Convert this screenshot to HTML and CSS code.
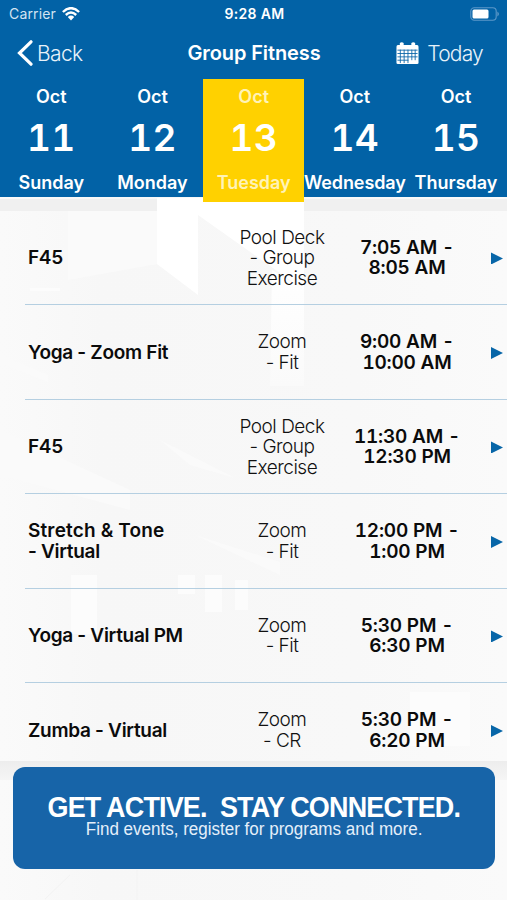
FILE: index.html
```
<!DOCTYPE html>
<html lang="en">
<head>
<meta charset="utf-8">
<meta name="viewport" content="width=device-width">
<title>Group Fitness</title>
<link rel="stylesheet" href="styles.css">
</head>
<body>
<div class="app">
  <svg class="backdrop" viewBox="0 0 507 900" aria-hidden="true">
    <defs>
      <linearGradient id="shade" x1="0" x2="1"><stop offset="0" stop-color="#fafafa"/><stop offset=".2" stop-color="#f7f7f7"/><stop offset=".7" stop-color="#f8f8f8"/><stop offset="1" stop-color="#fafafa"/></linearGradient>
      <linearGradient id="fade" x1="0" y1="0" x2="0" y2="1"><stop offset="0" stop-color="#fff"/><stop offset="1" stop-color="#fafafa"/></linearGradient>
      <linearGradient id="band" x1="0" y1="0" x2="0" y2="1"><stop offset="0" stop-color="#ededed"/><stop offset="1" stop-color="#f5f5f5"/></linearGradient>
    </defs>
    <rect width="507" height="900" fill="url(#shade)"/>
    <path d="M0 199H157V211H0zM304 199H507V211H304z" fill="#f0f0f0"/>
    <path d="M68 211H157V264L68 280z" fill="#fafafa"/>
    <path d="M157 198H304V290L198 215V295L157 264z" fill="#fff"/>
    <path d="M272 270L304 290V386H270z" fill="url(#fade)"/>
    <path d="M0 355L48 375V382L0 363zM0 430L130 490V510L0 475zM160 440L235 478L190 465zM195 535L280 562V575z" fill="#fafafa"/>
    <path d="M30 288H60V291H30zM71 575H97V634H71zM178 575H195V594H178zM205 575H222V612H205zM235 580H248V610H235zM410 692H470V746H410z" fill="#fcfcfc"/>
    <path d="M0 761H507V780H0z" fill="url(#band)"/>
    <path d="M45 899L70 875M137 870V900" stroke="#f3f3f3" fill="none"/>
  </svg>

  <header class="header">
    <div class="status">
      <div class="carrier"><span class="carrier-name">Carrier</span>
        <svg width="18" height="14" viewBox="0 0 18 14" fill="none" stroke="#fff" stroke-width="2.4"><path d="M.9 5Q9-2.7 17.1 5M3.8 8Q9 3.2 14.2 8"/><path d="M5.8 10Q9 7.2 12.2 10L9 13.4z" fill="#fff" stroke="none"/></svg>
      </div>
      <span class="clock">9:28 AM</span>
      <svg class="battery" width="30" height="14" viewBox="0 0 30 14"><rect x=".8" y=".8" width="25.4" height="12.4" rx="3.5" fill="none" stroke="#5c98c9" stroke-width="1.1"/><rect x="2.5" y="2.5" width="16" height="9" rx="1.5" fill="#fff"/><path d="M27.5 4.5Q30 7 27.5 9.5z" fill="#76a8d0"/></svg>
    </div>
    <nav class="navbar">
      <div class="back"><svg width="16" height="26" viewBox="0 0 16 26" fill="none" stroke="#fff" stroke-width="3.2" stroke-linecap="round"><path d="M14 1.8L2.5 13L14 24.2"/></svg><span class="back-text">Back</span></div>
      <h1 class="title">Group Fitness</h1>
      <div class="today">
        <svg width="23" height="23" viewBox="0 0 24 24"><path d="M2 3H4V1Q6-.5 8 1V3H16V1Q18-.5 20 1V3H22Q23.5 3 23.5 5V22Q23.5 23 22 23H2Q.5 23 .5 22V5Q.5 3 2 3z" fill="#fff"/><path d="M1.5 8.5H22.5M1.5 12H22.5M1.5 15.5H22.5M1.5 19H13M4.5 8V22M8.5 8V22M12.5 8V22M16.5 8V19M20 8V19" stroke="#0864a8" stroke-width=".9"/></svg>
        <span class="today-text">Today</span>
      </div>
    </nav>
    <div class="days">
      <div class="day"><span class="month">Oct</span><span class="date">11</span><span class="weekday">Sunday</span></div>
      <div class="day"><span class="month">Oct</span><span class="date">12</span><span class="weekday">Monday</span></div>
      <div class="day selected"><span class="month">Oct</span><span class="date">13</span><span class="weekday">Tuesday</span></div>
      <div class="day"><span class="month">Oct</span><span class="date">14</span><span class="weekday long">Wednesday</span></div>
      <div class="day"><span class="month">Oct</span><span class="date">15</span><span class="weekday">Thursday</span></div>
    </div>
  </header>

  <main class="classes">
    <div class="row"><div class="name">F45</div><div class="place">Pool Deck<br>- Group<br>Exercise</div><div class="time">7:05 AM -<br>8:05 AM</div><i class="arrow"></i></div>
    <div class="row"><div class="name">Yoga - Zoom Fit</div><div class="place">Zoom<br>- Fit</div><div class="time">9:00 AM -<br>10:00 AM</div><i class="arrow"></i></div>
    <div class="row"><div class="name">F45</div><div class="place">Pool Deck<br>- Group<br>Exercise</div><div class="time">11:30 AM -<br>12:30 PM</div><i class="arrow"></i></div>
    <div class="row"><div class="name"><span class="wide">Stretch &amp; Tone</span><br>- Virtual</div><div class="place">Zoom<br>- Fit</div><div class="time">12:00 PM -<br>1:00 PM</div><i class="arrow"></i></div>
    <div class="row"><div class="name">Yoga - Virtual PM</div><div class="place">Zoom<br>- Fit</div><div class="time">5:30 PM -<br>6:30 PM</div><i class="arrow"></i></div>
    <div class="row"><div class="name">Zumba - Virtual</div><div class="place">Zoom<br>- CR</div><div class="time">5:30 PM -<br>6:20 PM</div><i class="arrow"></i></div>
  </main>

  <footer class="promo">
    <div class="promo-title">GET ACTIVE.&nbsp; STAY CONNECTED.</div>
    <div class="promo-text">Find events, register for programs and more.</div>
  </footer>
</div>
</body>
</html>
```
FILE: styles.css
```
* { box-sizing: border-box; }
body { margin: 0; font-family: Inter, "Liberation Sans", sans-serif; }
.app { position: relative; width: 507px; height: 900px; overflow: hidden; }
.backdrop { position: absolute; inset: 0; z-index: -1; width: 507px; height: 900px; }

.header { height: 197.4px; background: #0262a6; color: #fff; }
.status { display: grid; grid-template-columns: 1fr auto 1fr; align-items: center; height: 27px; padding: 0 7px 0 9px; }
.carrier { display: flex; align-items: center; gap: 6px; }
.carrier-name { font-size: 14px; letter-spacing: .15px; color: #d3e4f2; }
.clock { font-size: 14px; font-weight: 600; letter-spacing: .35px; }
.battery { justify-self: end; }

.navbar { display: grid; grid-template-columns: 1fr auto 1fr; align-items: center; height: 52px; padding: 0 24px 0 17px; }
.back { display: flex; align-items: center; gap: 4px; }
.back-text, .today-text { font-size: 21px; font-weight: 300; letter-spacing: -.6px; color: #e8f2fa; }
.title { margin: 0 -4px 0 4px; font-size: 20px; font-weight: 600; letter-spacing: -.1px; }
.today { display: flex; align-items: center; justify-content: flex-end; gap: 8px; }
.today-text { letter-spacing: -.8px; }

.days { display: grid; grid-template-columns: repeat(5, 101.2px); height: 118px; padding-left: .7px; }
.day { display: flex; flex-direction: column; align-items: center; height: 118px; padding-top: 6px; }
.day.selected { height: 123.4px; background: #ffd100; }
.month { font-size: 18px; font-weight: 600; line-height: 24px; }
.date { margin-top: 9px; font-size: 37px; font-weight: 600; line-height: 40px; letter-spacing: .3px; font-variant-numeric: tabular-nums; }
.weekday { margin-top: 12px; font-size: 18px; font-weight: 600; line-height: 26px; white-space: nowrap; }
.weekday.long { letter-spacing: -.1px; }
.selected .month, .selected .weekday { color: #fff3b8; }

.classes { padding: 13.6px 0 0 25px; height: 563.6px; }
.row { display: grid; grid-template-columns: 202px 110px 140px 30px; align-items: center; height: 94.5px; padding-top: 1.5px; border-bottom: 1.5px solid #b5cfe1; font-size: 19px; line-height: 20.5px; color: #0b0b0b; }
.row:last-child { border-bottom-color: transparent; }
.name { padding-left: 3px; font-weight: 600; letter-spacing: -.3px; white-space: nowrap; }
.wide { letter-spacing: .15px; }
.place { text-align: center; font-weight: 300; letter-spacing: -.5px; color: #111; }
.time { text-align: center; font-weight: 600; letter-spacing: -.2px; font-variant-numeric: tabular-nums; }
.arrow { justify-self: end; width: 12px; height: 12px; margin-right: 4px; background: #0866a8; clip-path: polygon(0 0, 100% 50%, 0 100%); }

.promo { display: flex; flex-direction: column; align-items: center; margin: 6px 12.5px 0 13px; height: 102px; padding-top: 26px; border-radius: 12px; background: #1764a8; color: #fff; font-family: "Liberation Sans", sans-serif; white-space: nowrap; }
.promo-title { font-size: 29px; font-weight: 700; line-height: 28px; letter-spacing: -.9px; transform: scaleX(.93); }
.promo-text { font-size: 18px; line-height: 17px; color: #e4effa; transform: scaleX(.945); }
```
